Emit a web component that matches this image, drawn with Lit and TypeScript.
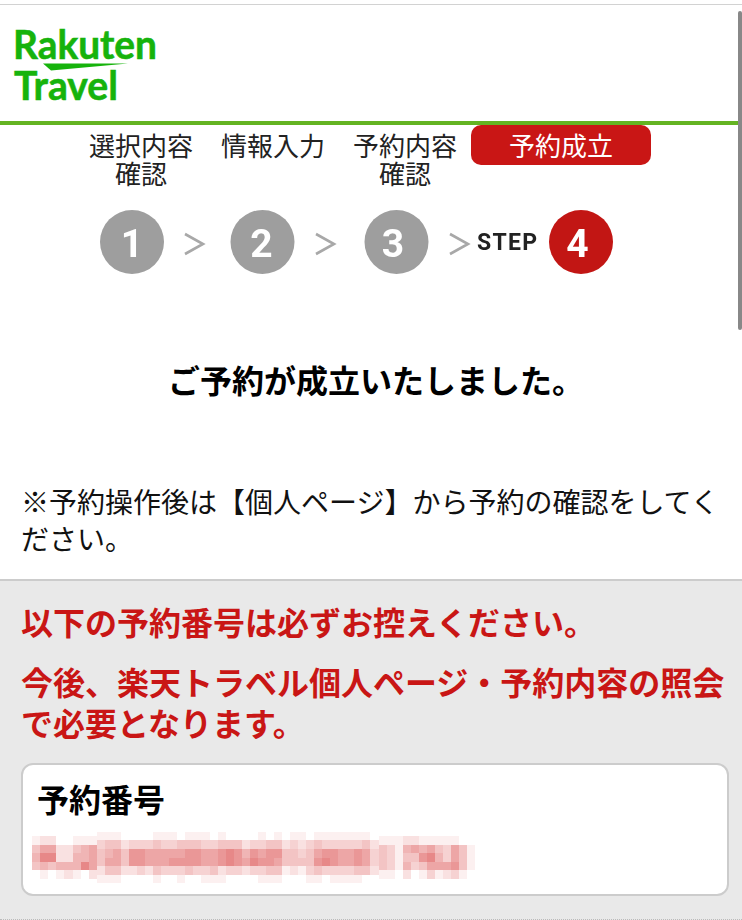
import { LitElement, html, css, svg } from "lit";
import { customElement } from "lit/decorators.js";

const SEG_A = ["12200111", "46622456", "58822556", "45455586", "01012102"];
const SEG_B = [
  "11100001110111010000101011011111110",
  "34423334334443344423344232343333342",
  "45647766666776678757677443467766763",
  "46647766677776678768776444478766763",
  "24422324333433423323344121343333442",
  "11100001001001110000111000110111100",
];
const SEG_C = ["111221111100", "431565643641", "431447853641", "431534666741", "110201312310"];

function cellColor(ch: string): string {
  const v = Number(ch) / 8;
  const r = Math.round(255 - v * 24);
  const g = Math.round(255 - v * 119);
  return `rgb(${r},${g},${g})`;
}

const STEPS = ["選択内容\n確認", "情報入力", "予約内容\n確認"];

@customElement("app-root")
export class AppRoot extends LitElement {
  static styles = css`
    :host {
      display: block;
      width: 742px;
      height: 920px;
      position: relative;
      overflow: hidden;
      background: #fff;
      color: #000;
      font-family: "Noto Sans CJK JP", "Noto Sans", sans-serif;
    }
    .scrollbar {
      position: absolute;
      top: 11px;
      right: 0;
      width: 4px;
      height: 319px;
      background: #888;
      border-radius: 2px;
    }
    .topline {
      height: 1px;
      margin-top: 4px;
      background: #d2d2d2;
    }
    .logo {
      display: block;
      width: 200px;
      height: 116px;
    }
    .logo text {
      font-family: "Lato", sans-serif;
      font-weight: 700;
      font-size: 41px;
      fill: #16b30c;
      stroke: #16b30c;
      stroke-width: 0.6px;
    }
    .logo polygon {
      fill: #16b30c;
    }
    .greenbar {
      height: 4px;
      background: #64b422;
    }
    .labels {
      display: grid;
      grid-template-columns: 132px 132px 132px 180px;
      padding-left: 75px;
      height: 70px;
      align-items: start;
      font-size: 26px;
      line-height: 28px;
      text-align: center;
      color: #222;
    }
    .label {
      padding-top: 6px;
      white-space: pre-line;
    }
    .label.current {
      padding: 6px 0;
      height: 40px;
      box-sizing: border-box;
      color: #fff;
      background: #c91615;
      border-radius: 10px;
    }
    .flow {
      display: block;
      width: 742px;
      height: 64px;
      margin-top: 15px;
      filter: blur(0.35px);
    }
    .flow text {
      font-family: "Roboto", sans-serif;
      font-weight: 700;
    }
    .title {
      margin: 81px 0 0;
      padding-left: 10px;
      font-size: 32px;
      line-height: 48px;
      font-weight: 700;
      text-align: center;
    }
    .note {
      margin: 80px 0 0;
      padding: 0 21px 21.5px;
      font-size: 28px;
      line-height: 37px;
      color: #111;
    }
    .panel {
      height: 341px;
      box-sizing: border-box;
      padding: 20px 13px 0 21px;
      background: #e9e9e9;
      border-top: 2px solid #ccc;
      border-bottom: 1px dotted #bbb;
    }
    .warn {
      margin: 0 0 19px;
      font-size: 32px;
      line-height: 41px;
      font-weight: 700;
      color: #c91615;
    }
    .warn + .warn {
      margin-bottom: 20px;
    }
    .card {
      box-sizing: border-box;
      height: 133px;
      padding: 12px 15px 0 9px;
      background: #fff;
      border: 2px solid #ccc;
      border-radius: 12px;
    }
    .card h2 {
      margin: 0 0 0 5px;
      font-size: 32px;
      line-height: 42px;
      font-weight: 700;
    }
    .mosaic {
      display: flex;
      align-items: center;
      height: 52px;
      margin-top: 13px;
    }
    .seg {
      display: grid;
      grid-auto-flow: row;
      grid-auto-rows: 8.66px;
    }
    .seg i {
      display: block;
    }
  `;

  private seg(rows: string[], colW: number) {
    const cols = rows[0].length;
    return html`<div class="seg" style="grid-template-columns:repeat(${cols},${colW}px)">
      ${rows.map((r) => [...r].map((c) => html`<i style="background:${cellColor(c)}"></i>`))}
    </div>`;
  }

  private chevron(x: number) {
    return svg`<path d="M${x} 24 L${x + 18} 34 L${x} 44" fill="none" stroke="#a8a8a8" stroke-width="2.6"/>`;
  }

  private badge(cx: number, tx: number, n: string, color: string) {
    return svg`<circle cx=${cx} cy="32" r="32" fill=${color}></circle>
      <text x=${tx} y="47" font-size="39" fill="#fff" text-anchor="middle">${n}</text>`;
  }

  render() {
    return html`
      <div class="topline"></div>
      <svg class="logo" viewBox="0 0 200 116">
        <text>
          <tspan x="13" y="54" textLength="144" lengthAdjust="spacingAndGlyphs">Rakuten</tspan>
          <tspan x="14" y="95" textLength="104" lengthAdjust="spacingAndGlyphs">Travel</tspan>
        </text>
        <polygon points="43,58.5 128,58.5 51,65.5"></polygon>
      </svg>
      <div class="greenbar"></div>
      <div class="labels">
        ${STEPS.map((s) => html`<div class="label">${s}</div>`)}
        <div class="label current">予約成立</div>
      </div>
      <svg class="flow" viewBox="0 0 742 64">
        ${this.badge(132, 132, "1", "#9e9e9e")}
        ${this.chevron(185)}
        ${this.badge(262.5, 261.5, "2", "#9e9e9e")}
        ${this.chevron(316)}
        ${this.badge(396.5, 393, "3", "#9e9e9e")}
        ${this.chevron(450)}
        <text x="477" y="40" font-size="23" fill="#222" textLength="60">STEP</text>
        ${this.badge(581, 577.5, "4", "#c21614")}
      </svg>
      <h1 class="title">ご予約が成立いたしました。</h1>
      <p class="note">※予約操作後は【個人ページ】から予約の確認をしてください。</p>
      <section class="panel">
        <p class="warn">以下の予約番号は必ずお控えください。</p>
        <p class="warn">今後、楽天トラベル個人ページ・予約内容の照会で必要となります。</p>
        <div class="card">
          <h2>予約番号</h2>
          <div class="mosaic">
            ${this.seg(SEG_A, 8.12)}${this.seg(SEG_B, 8.06)}${this.seg(SEG_C, 8)}
          </div>
        </div>
      </section>
      <div class="scrollbar"></div>
    `;
  }
}
